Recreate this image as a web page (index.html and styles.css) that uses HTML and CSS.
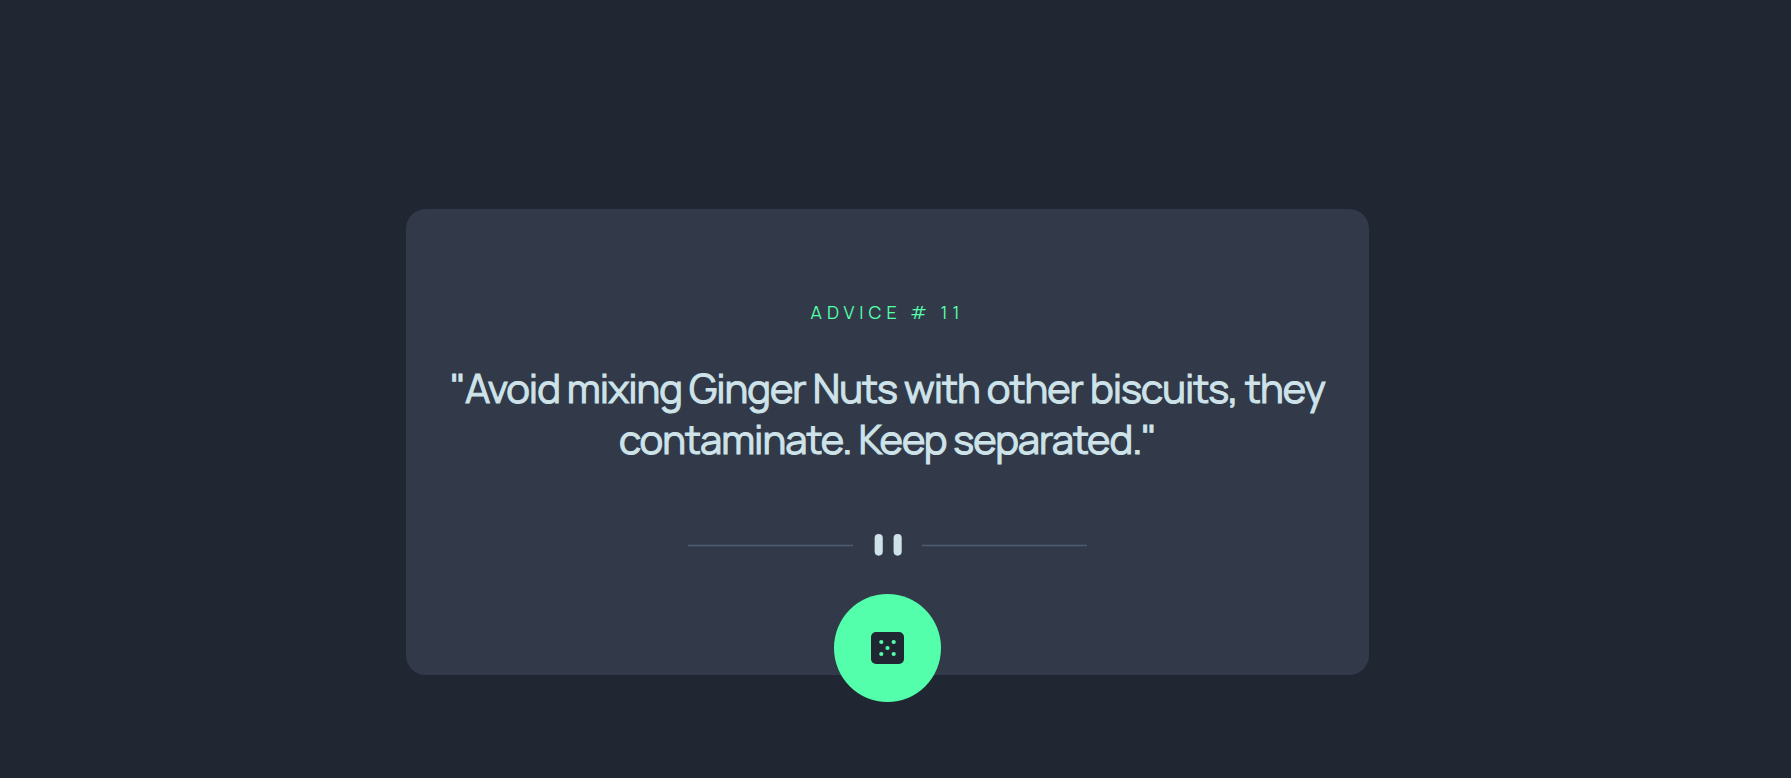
FILE: index.html
```html
<!DOCTYPE html>
<html lang="en">
<head>
  <meta charset="utf-8">
  <meta name="viewport" content="width=device-width, initial-scale=1">
  <title>Advice Generator</title>
  <link rel="stylesheet" href="styles.css">
</head>
<body>
  <main class="card">
    <h1 class="card-label">ADVICE # 11</h1>
    <p class="card-quote">"Avoid mixing Ginger Nuts with other biscuits, they contaminate. Keep separated."</p>
    <svg class="card-divider" viewBox="0 0 295 16" aria-hidden="true">
      <path fill="#4f5d74" d="M0 8h122v1H0zM173 8h122v1H173z"/>
      <g fill="#cee3e9">
        <rect x="138" width="6" height="16" rx="3"/>
        <rect x="152" width="6" height="16" rx="3"/>
      </g>
    </svg>
    <button class="dice-button" type="button" aria-label="New advice">
      <svg class="dice-icon" viewBox="0 0 33 32" aria-hidden="true">
        <rect width="33" height="32" rx="5" fill="#202733"/>
        <g fill="#53ffaa">
          <circle cx="10.3" cy="10" r="2.1"/>
          <circle cx="22.7" cy="10" r="2.1"/>
          <circle cx="16.5" cy="16" r="2.1"/>
          <circle cx="10.3" cy="22" r="2.1"/>
          <circle cx="22.7" cy="22" r="2.1"/>
        </g>
      </svg>
    </button>
  </main>
</body>
</html>
```
FILE: styles.css
```css
* {
  box-sizing: border-box;
}

body {
  margin: 0;
  padding: 209px 32px 76px 16px;
  background: #202733;
  font-family: Manrope, Inter, sans-serif;
}

.card {
  display: flex;
  flex-direction: column;
  align-items: center;
  max-width: 963px;
  margin: 0 auto 27px;
  padding: 91px 40px 0;
  border-radius: 20px;
  background: #323a49;
  text-align: center;
}

.card-label {
  margin: 0;
  color: #53ffaa;
  font-size: 18px;
  font-weight: 400;
  line-height: 24px;
  letter-spacing: 5px;
}

.card-quote {
  margin: 38px 0 0;
  color: #cee3e9;
  font-size: 40px;
  font-weight: 400;
  line-height: 51px;
  letter-spacing: -1px;
  -webkit-text-stroke: 1px #cee3e9;
}

.card-divider {
  width: 399px;
  max-width: 100%;
  margin-top: 70px;
}

.dice-button {
  display: flex;
  align-items: center;
  justify-content: center;
  width: 107px;
  height: 108px;
  margin: 38px 0 -27px;
  padding: 0;
  border: 0;
  border-radius: 50%;
  background: #53ffaa;
  cursor: pointer;
}

.dice-icon {
  width: 33px;
  height: 32px;
}
```
